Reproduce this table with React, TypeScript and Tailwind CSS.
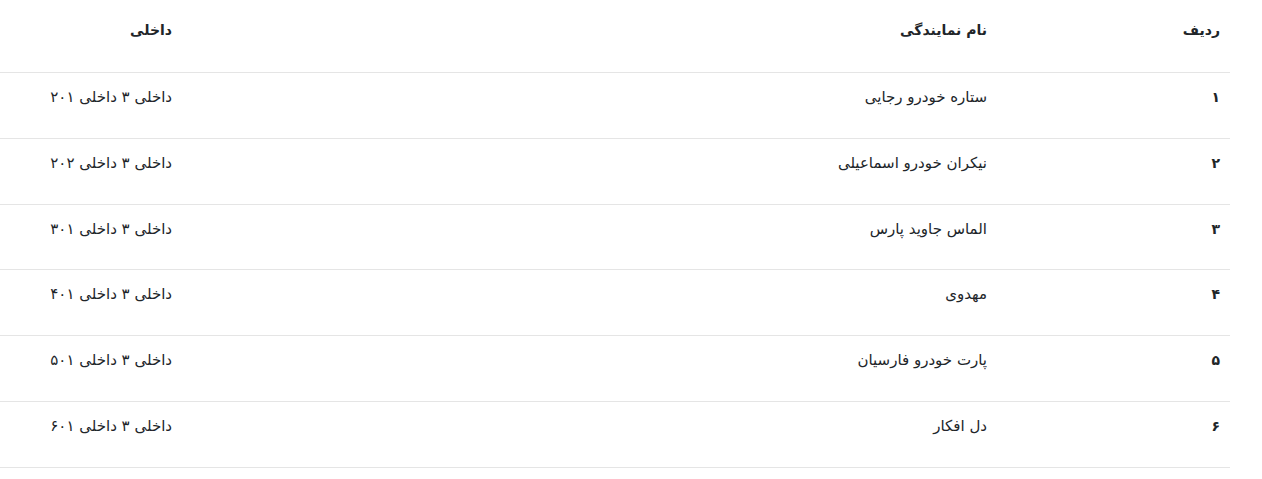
import React from "react";

const rows = [
  ["۱", "ستاره خودرو رجایی", "داخلی ۳ داخلی ۲۰۱"],
  ["۲", "نیکران خودرو اسماعیلی", "داخلی ۳ داخلی ۲۰۲"],
  ["۳", "الماس جاوید پارس", "داخلی ۳ داخلی ۳۰۱"],
  ["۴", "مهدوی", "داخلی ۳ داخلی ۴۰۱"],
  ["۵", "پارت خودرو فارسیان", "داخلی ۳ داخلی ۵۰۱"],
  ["۶", "دل افکار", "داخلی ۳ داخلی ۶۰۱"],
];

export default function App() {
  return (
    <div className="w-[1262px] bg-white" style={{ fontFamily: '"DejaVu Sans", "Noto Sans", sans-serif' }}>
      <div dir="rtl" className="w-[1230px] text-[15px] text-[#212529]">
        <div className="flex h-[73px] border-b border-[#e5e5e5] font-bold text-[14px]">
          <div className="w-[233px] pr-[10px] pt-[20px] leading-[20px]">ردیف</div>
          <div className="w-[815px] pr-[10px] pt-[20px] leading-[20px]">نام نمایندگی</div>
          <div className="w-[182px] pr-[10px] pt-[20px] leading-[20px]">داخلی</div>
        </div>
        {rows.map((r, i) => (
          <div key={i} className="flex h-[65.8px] border-b border-[#e5e5e5]">
            <div className="w-[233px] pr-[10px] pt-[13px] leading-[22px] font-bold text-[14px]">{r[0]}</div>
            <div className="w-[815px] pr-[10px] pt-[13px] leading-[22px]">{r[1]}</div>
            <div className="w-[182px] pr-[10px] pt-[13px] leading-[22px]">{r[2]}</div>
          </div>
        ))}
      </div>
    </div>
  );
}
